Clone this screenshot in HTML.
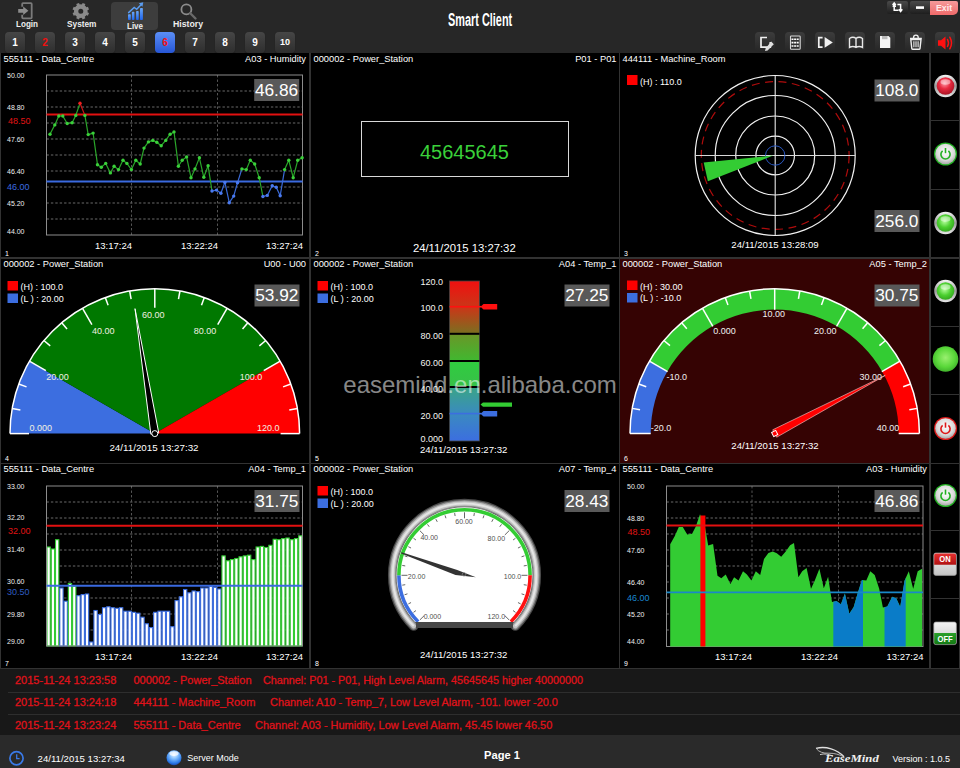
<!DOCTYPE html>
<html><head><meta charset="utf-8">
<style>
*{margin:0;padding:0;box-sizing:border-box}
html,body{width:960px;height:768px;overflow:hidden;background:#272727;font-family:"Liberation Sans",sans-serif;color:#fff}
.a{position:absolute}
svg{position:absolute;left:0;top:0}
.nb{position:absolute;top:32px;width:20px;height:21px;border-radius:4px;background:linear-gradient(#464646,#2e2e2e);font-weight:bold;font-size:10px;text-align:center;line-height:21px;color:#fff;box-shadow:0 1px 1px #1a1a1a}
.tb{position:absolute;top:32px;width:20px;height:20px;border-radius:4px;background:linear-gradient(#3c3c3c,#262626)}
.tl{position:absolute;font-weight:bold;font-size:9px;color:#eee;white-space:nowrap;transform-origin:0 0}
.pt{font-size:9px;fill:#fff}
.al{position:absolute;left:0;width:960px;height:22px;color:#e8121a;font-size:11px;white-space:nowrap;-webkit-text-stroke:0.3px #d8121a}
.al span{position:absolute;top:5px}
</style></head><body>
<!-- TOP BAR -->
<div class="a" style="left:0;top:0;width:960px;height:53px;background:#272727"></div>
<div class="a" style="left:111px;top:2px;width:47px;height:28px;border-radius:4px;background:#3d3d3d"></div>
<div class="tl" style="left:16px;top:18.5px;transform:scaleX(0.9)">Login</div>
<div class="tl" style="left:67px;top:18.5px;transform:scaleX(0.92)">System</div>
<div class="tl" style="left:127px;top:20.5px;transform:scaleX(0.89)">Live</div>
<div class="tl" style="left:173px;top:18.5px;transform:scaleX(0.97)">History</div>
<div class="nb" style="left:5px">1</div>
<div class="nb" style="left:35px;color:#f01010">2</div>
<div class="nb" style="left:65px">3</div>
<div class="nb" style="left:95px">4</div>
<div class="nb" style="left:125px">5</div>
<div class="nb" style="left:155px;background:linear-gradient(#5b8ef5,#2656d6);color:#f01010">6</div>
<div class="nb" style="left:185px">7</div>
<div class="nb" style="left:215px">8</div>
<div class="nb" style="left:245px">9</div>
<div class="nb" style="left:275px;font-size:9px">10</div>
<div class="a" style="left:448px;top:8.5px;font-weight:bold;font-size:18.8px;white-space:nowrap;transform:scaleX(0.58);transform-origin:0 0">Smart Client</div>
<div class="tb" style="left:755px"></div>
<div class="tb" style="left:785px"></div>
<div class="tb" style="left:815px"></div>
<div class="tb" style="left:845px"></div>
<div class="tb" style="left:875px"></div>
<div class="tb" style="left:905px"></div>
<div class="tb" style="left:935px"></div>
<div class="a" style="left:887px;top:1px;width:21px;height:13px;border-radius:2px;background:linear-gradient(#4a4a4a,#1e1e1e)"></div>
<div class="a" style="left:910px;top:1px;width:21px;height:13px;border-radius:2px 0 0 2px;background:linear-gradient(#4a4a4a,#1e1e1e)"></div>
<div class="a" style="left:930px;top:1px;width:28px;height:14px;border-radius:0 2px 5px 0;background:linear-gradient(#f59a9a,#ef6a6a);font-size:8.8px;font-weight:bold;line-height:14px;text-align:center;color:#ffeaea">Exit</div>

<!-- GRID -->
<div class="a" style="left:0;top:53px;width:960px;height:616px;background:#323232"></div>
<div class="a" style="left:1px;top:53px;width:308px;height:204px;background:#000"></div>
<div class="a" style="left:311px;top:53px;width:308px;height:204px;background:#000"></div>
<div class="a" style="left:620px;top:53px;width:309px;height:204px;background:#000"></div>
<div class="a" style="left:1px;top:259px;width:308px;height:204px;background:#000"></div>
<div class="a" style="left:311px;top:259px;width:308px;height:204px;background:#000"></div>
<div class="a" style="left:620px;top:259px;width:309px;height:204px;background:#350303"></div>
<div class="a" style="left:1px;top:464px;width:308px;height:204px;background:#000"></div>
<div class="a" style="left:311px;top:464px;width:308px;height:204px;background:#000"></div>
<div class="a" style="left:620px;top:464px;width:309px;height:204px;background:#000"></div>
<div class="a" style="left:931px;top:53px;width:28px;height:67px;background:#000"></div>
<div class="a" style="left:931px;top:121px;width:28px;height:68px;background:#000"></div>
<div class="a" style="left:931px;top:190px;width:28px;height:67px;background:#000"></div>
<div class="a" style="left:931px;top:259px;width:28px;height:67px;background:#000"></div>
<div class="a" style="left:931px;top:327px;width:28px;height:67px;background:#000"></div>
<div class="a" style="left:931px;top:395px;width:28px;height:68px;background:#000"></div>
<div class="a" style="left:931px;top:464px;width:28px;height:66px;background:#000"></div>
<div class="a" style="left:931px;top:531px;width:28px;height:67px;background:#000"></div>
<div class="a" style="left:931px;top:599px;width:28px;height:69px;background:#000"></div>

<!-- ALARMS -->
<div class="a" style="left:0;top:669px;width:960px;height:66px;background:#181818"></div>
<div class="a" style="left:8px;top:692px;width:952px;height:1px;background:#2e2e2e"></div>
<div class="a" style="left:8px;top:714px;width:952px;height:1px;background:#2e2e2e"></div>
<div class="al" style="top:669px"><span style="left:15px">2015-11-24 13:23:58</span><span style="left:133.5px">000002 - Power_Station</span><span style="left:263.3px;transform:scaleX(0.982);transform-origin:0 0">Channel: P01 - P01, High Level Alarm, 45645645 higher 40000000</span></div>
<div class="al" style="top:691px"><span style="left:15px">2015-11-24 13:24:18</span><span style="left:133.5px">444111 - Machine_Room</span><span style="left:269.5px;transform:scaleX(0.992);transform-origin:0 0">Channel: A10 - Temp_7, Low Level Alarm, -101. lower -20.0</span></div>
<div class="al" style="top:714px"><span style="left:15px">2015-11-24 13:23:24</span><span style="left:133.5px">555111 - Data_Centre</span><span style="left:255px;transform:scaleX(0.997);transform-origin:0 0">Channel: A03 - Humidity, Low Level Alarm, 45.45 lower 46.50</span></div>

<!-- FOOTER -->
<div class="a" style="left:0;top:735px;width:960px;height:33px;background:#2a2a2a"></div>
<div class="a" style="left:37.6px;top:753px;font-size:9.6px;color:#fff;white-space:nowrap">24/11/2015 13:27:34</div>
<div class="a" style="left:187.2px;top:753px;font-size:9px;color:#fff;white-space:nowrap">Server Mode</div>
<div class="a" style="left:483.5px;top:749px;font-size:11.5px;font-weight:bold;color:#fff;white-space:nowrap;transform:scaleX(0.97);transform-origin:0 0">Page 1</div>
<div class="a" style="left:892.5px;top:753.5px;font-size:9px;color:#fff;white-space:nowrap">Version : 1.0.5</div>

<svg width="960" height="768" font-family="Liberation Sans" style="position:absolute;left:0;top:0"><text x="3.5" y="62" font-size="9.3" fill="#fff" text-anchor="start" >555111 - Data_Centre</text>
<text x="306" y="62" font-size="9.3" fill="#fff" text-anchor="end" >A03 - Humidity</text>
<text x="313.5" y="62" font-size="9.3" fill="#fff" text-anchor="start" >000002 - Power_Station</text>
<text x="616.5" y="62" font-size="9.3" fill="#fff" text-anchor="end" >P01 - P01</text>
<text x="622.5" y="62" font-size="9.3" fill="#fff" text-anchor="start" >444111 - Machine_Room</text>
<text x="3.5" y="267" font-size="9.3" fill="#fff" text-anchor="start" >000002 - Power_Station</text>
<text x="306" y="267" font-size="9.3" fill="#fff" text-anchor="end" >U00 - U00</text>
<text x="313.5" y="267" font-size="9.3" fill="#fff" text-anchor="start" >000002 - Power_Station</text>
<text x="616.5" y="267" font-size="9.3" fill="#fff" text-anchor="end" >A04 - Temp_1</text>
<text x="622.5" y="267" font-size="9.3" fill="#fff" text-anchor="start" >000002 - Power_Station</text>
<text x="927" y="267" font-size="9.3" fill="#fff" text-anchor="end" >A05 - Temp_2</text>
<text x="3.5" y="472" font-size="9.3" fill="#fff" text-anchor="start" >555111 - Data_Centre</text>
<text x="306" y="472" font-size="9.3" fill="#fff" text-anchor="end" >A04 - Temp_1</text>
<text x="313.5" y="472" font-size="9.3" fill="#fff" text-anchor="start" >000002 - Power_Station</text>
<text x="616.5" y="472" font-size="9.3" fill="#fff" text-anchor="end" >A07 - Temp_4</text>
<text x="622.5" y="472" font-size="9.3" fill="#fff" text-anchor="start" >555111 - Data_Centre</text>
<text x="927" y="472" font-size="9.3" fill="#fff" text-anchor="end" >A03 - Humidity</text>
<text x="5" y="255.5" font-size="7" fill="#fff" text-anchor="start" >1</text>
<text x="315" y="255.5" font-size="7" fill="#fff" text-anchor="start" >2</text>
<text x="624" y="255.5" font-size="7" fill="#fff" text-anchor="start" >3</text>
<text x="5" y="460.5" font-size="7" fill="#fff" text-anchor="start" >4</text>
<text x="315" y="460.5" font-size="7" fill="#fff" text-anchor="start" >5</text>
<text x="624" y="460.5" font-size="7" fill="#fff" text-anchor="start" >6</text>
<text x="5" y="666" font-size="7" fill="#fff" text-anchor="start" >7</text>
<text x="315" y="666" font-size="7" fill="#fff" text-anchor="start" >8</text>
<text x="624" y="666" font-size="7" fill="#fff" text-anchor="start" >9</text>
<rect x="361.5" y="121.5" width="207" height="55" fill="none" stroke="#d8d8d8" stroke-width="1"/>
<text x="464.5" y="158.5" font-size="20" fill="#3ad13a" text-anchor="middle" >45645645</text>
<text x="464.3" y="252.3" font-size="11.3" fill="#fff" text-anchor="middle" >24/11/2015 13:27:32</text>
<circle cx="775.2" cy="155.5" r="73.9" fill="none" stroke="#b00c0c" stroke-width="1.2" stroke-dasharray="8,5.5"/>
<circle cx="775.2" cy="155.5" r="80" fill="none" stroke="#f2f2f2" stroke-width="1.2"/>
<circle cx="775.2" cy="155.5" r="60" fill="none" stroke="#f2f2f2" stroke-width="1.2"/>
<circle cx="775.2" cy="155.5" r="39.5" fill="none" stroke="#f2f2f2" stroke-width="1.2"/>
<circle cx="775.2" cy="155.5" r="19.3" fill="none" stroke="#f2f2f2" stroke-width="1.2"/>
<line x1="695.2" y1="155.5" x2="855.2" y2="155.5" stroke="#d8d8d8" stroke-width="1.1"/>
<line x1="775.2" y1="75.5" x2="775.2" y2="235.5" stroke="#e8e8e8" stroke-width="1.1"/>
<circle cx="775.2" cy="155.5" r="9.7" fill="none" stroke="#2a58c0" stroke-width="1"/>
<path d="M773.2,155.5 L703.7,162.5 L707.9,181.3 Z" fill="#33cc33"/>
<rect x="627" y="75" width="10.5" height="10" fill="#ff0000"/>
<text x="640" y="84.5" font-size="9" fill="#fff" text-anchor="start" >(H) : 110.0</text>
<rect x="874.5" y="79.5" width="45" height="22" fill="#595959"/><text x="896.8" y="96.2" font-size="17.3" fill="#fff" text-anchor="middle" >108.0</text>
<rect x="874.5" y="210" width="45" height="22" fill="#595959"/><text x="896.8" y="226.7" font-size="17.3" fill="#fff" text-anchor="middle" >256.0</text>
<text x="775" y="247.5" font-size="9.6" fill="#fff" text-anchor="middle" >24/11/2015 13:28:09</text>
<path d="M154.8,433.6 L10.00,433.60 A144.8,144.8 0 0 1 29.40,361.20 Z" fill="#3c6ee0"/>
<path d="M154.8,433.6 L29.40,361.20 A144.8,144.8 0 0 1 280.20,361.20 Z" fill="#007800"/>
<path d="M154.8,433.6 L280.20,361.20 A144.8,144.8 0 0 1 299.60,433.60 Z" fill="#ff0000"/>
<path d="M10.0,433.6 A144.8,144.8 0 0 1 299.6,433.6" fill="none" stroke="#fff" stroke-width="1.5"/>
<line x1="299.60" y1="433.60" x2="280.60" y2="433.60" stroke="#fff" stroke-width="1.5"/>
<line x1="297.40" y1="408.46" x2="289.23" y2="409.90" stroke="#fff" stroke-width="1.5"/>
<line x1="290.87" y1="384.08" x2="283.07" y2="386.91" stroke="#fff" stroke-width="1.5"/>
<line x1="280.20" y1="361.20" x2="263.75" y2="370.70" stroke="#fff" stroke-width="1.5"/>
<line x1="265.72" y1="340.52" x2="259.37" y2="345.86" stroke="#fff" stroke-width="1.5"/>
<line x1="247.88" y1="322.68" x2="242.54" y2="329.03" stroke="#fff" stroke-width="1.5"/>
<line x1="227.20" y1="308.20" x2="217.70" y2="324.65" stroke="#fff" stroke-width="1.5"/>
<line x1="204.32" y1="297.53" x2="201.49" y2="305.33" stroke="#fff" stroke-width="1.5"/>
<line x1="179.94" y1="291.00" x2="178.50" y2="299.17" stroke="#fff" stroke-width="1.5"/>
<line x1="154.80" y1="288.80" x2="154.80" y2="307.80" stroke="#fff" stroke-width="1.5"/>
<line x1="129.66" y1="291.00" x2="131.10" y2="299.17" stroke="#fff" stroke-width="1.5"/>
<line x1="105.28" y1="297.53" x2="108.11" y2="305.33" stroke="#fff" stroke-width="1.5"/>
<line x1="82.40" y1="308.20" x2="91.90" y2="324.65" stroke="#fff" stroke-width="1.5"/>
<line x1="61.72" y1="322.68" x2="67.06" y2="329.03" stroke="#fff" stroke-width="1.5"/>
<line x1="43.88" y1="340.52" x2="50.23" y2="345.86" stroke="#fff" stroke-width="1.5"/>
<line x1="29.40" y1="361.20" x2="45.85" y2="370.70" stroke="#fff" stroke-width="1.5"/>
<line x1="18.73" y1="384.08" x2="26.53" y2="386.91" stroke="#fff" stroke-width="1.5"/>
<line x1="12.20" y1="408.46" x2="20.37" y2="409.90" stroke="#fff" stroke-width="1.5"/>
<line x1="10.00" y1="433.60" x2="29.00" y2="433.60" stroke="#fff" stroke-width="1.5"/>
<text x="40.8" y="430.5" font-size="9" fill="#f0f0e0" text-anchor="middle" >0.000</text>
<text x="57.5" y="379.5" font-size="9" fill="#f0f0e0" text-anchor="middle" >20.00</text>
<text x="103.3" y="333.5" font-size="9" fill="#f0f0e0" text-anchor="middle" >40.00</text>
<text x="153.3" y="317.5" font-size="9" fill="#f0f0e0" text-anchor="middle" >60.00</text>
<text x="205" y="333.5" font-size="9" fill="#f0f0e0" text-anchor="middle" >80.00</text>
<text x="251" y="379.5" font-size="9" fill="#f0f0e0" text-anchor="middle" >100.0</text>
<text x="268.3" y="430.5" font-size="9" fill="#f0f0e0" text-anchor="middle" >120.0</text>
<path d="M150.85,434.23 L135.01,308.66 L158.75,432.97 Z" fill="#000" stroke="#fff" stroke-width="1"/>
<circle cx="154.8" cy="433.6" r="3" fill="#000" stroke="#fff" stroke-width="1"/>
<rect x="7.5" y="281" width="10.5" height="9.5" fill="#ff0000"/><rect x="7.5" y="293.5" width="10.5" height="9.5" fill="#3c6ee0"/><text x="20.5" y="290" font-size="9" fill="#fff" text-anchor="start" >(H) : 100.0</text><text x="20.5" y="301.5" font-size="9" fill="#fff" text-anchor="start" >(L ) : 20.00</text>
<rect x="254.5" y="284.5" width="45" height="22" fill="#595959"/><text x="276.8" y="301.2" font-size="17.3" fill="#fff" text-anchor="middle" >53.92</text>
<text x="154" y="450.8" font-size="9.8" fill="#fff" text-anchor="middle" >24/11/2015 13:27:32</text>
<path d="M630.00,433.50 A144.7,144.7 0 0 1 649.39,361.15 L667.31,371.50 A124,124 0 0 0 650.70,433.50 Z" fill="#3c6ee0"/>
<path d="M649.39,361.15 A144.7,144.7 0 0 1 900.01,361.15 L882.09,371.50 A124,124 0 0 0 667.31,371.50 Z" fill="#33cc33"/>
<path d="M900.01,361.15 A144.7,144.7 0 0 1 919.40,433.50 L898.70,433.50 A124,124 0 0 0 882.09,371.50 Z" fill="#ff0000"/>
<path d="M630.0,433.5 A144.7,144.7 0 0 1 919.4000000000001,433.5" fill="none" stroke="#fff" stroke-width="1.5"/>
<line x1="630.0" y1="433.5" x2="650.7" y2="433.5" stroke="#fff" stroke-width="1.5"/>
<line x1="919.4000000000001" y1="433.5" x2="898.7" y2="433.5" stroke="#fff" stroke-width="1.5"/>
<line x1="917.20" y1="408.37" x2="909.32" y2="409.76" stroke="#fff" stroke-width="1.5"/>
<line x1="910.67" y1="384.01" x2="903.16" y2="386.75" stroke="#fff" stroke-width="1.5"/>
<line x1="900.01" y1="361.15" x2="881.83" y2="371.65" stroke="#fff" stroke-width="1.5"/>
<line x1="885.55" y1="340.49" x2="879.42" y2="345.63" stroke="#fff" stroke-width="1.5"/>
<line x1="867.71" y1="322.65" x2="862.57" y2="328.78" stroke="#fff" stroke-width="1.5"/>
<line x1="847.05" y1="308.19" x2="836.55" y2="326.37" stroke="#fff" stroke-width="1.5"/>
<line x1="824.19" y1="297.53" x2="821.45" y2="305.04" stroke="#fff" stroke-width="1.5"/>
<line x1="799.83" y1="291.00" x2="798.44" y2="298.88" stroke="#fff" stroke-width="1.5"/>
<line x1="774.70" y1="288.80" x2="774.70" y2="309.80" stroke="#fff" stroke-width="1.5"/>
<line x1="749.57" y1="291.00" x2="750.96" y2="298.88" stroke="#fff" stroke-width="1.5"/>
<line x1="725.21" y1="297.53" x2="727.95" y2="305.04" stroke="#fff" stroke-width="1.5"/>
<line x1="702.35" y1="308.19" x2="712.85" y2="326.37" stroke="#fff" stroke-width="1.5"/>
<line x1="681.69" y1="322.65" x2="686.83" y2="328.78" stroke="#fff" stroke-width="1.5"/>
<line x1="663.85" y1="340.49" x2="669.98" y2="345.63" stroke="#fff" stroke-width="1.5"/>
<line x1="649.39" y1="361.15" x2="667.57" y2="371.65" stroke="#fff" stroke-width="1.5"/>
<line x1="638.73" y1="384.01" x2="646.24" y2="386.75" stroke="#fff" stroke-width="1.5"/>
<line x1="632.20" y1="408.37" x2="640.08" y2="409.76" stroke="#fff" stroke-width="1.5"/>
<text x="661" y="430.5" font-size="9" fill="#f0f0f0" text-anchor="middle" >-20.0</text>
<text x="676.8" y="379.5" font-size="9" fill="#f0f0f0" text-anchor="middle" >-10.0</text>
<text x="724.6" y="333.5" font-size="9" fill="#f0f0f0" text-anchor="middle" >0.000</text>
<text x="773.8" y="316.8" font-size="9" fill="#f0f0f0" text-anchor="middle" >10.00</text>
<text x="825.2" y="333.5" font-size="9" fill="#f0f0f0" text-anchor="middle" >20.00</text>
<text x="870.8" y="379.5" font-size="9" fill="#f0f0f0" text-anchor="middle" >30.00</text>
<text x="888" y="430.5" font-size="9" fill="#f0f0f0" text-anchor="middle" >40.00</text>
<path d="M772.75,429.78 L885.20,375.40 L776.65,437.22 Z" fill="#ff0000" stroke="#f4d0d0" stroke-width="0.6"/>
<rect x="772.4000000000001" y="431.2" width="4.6" height="4.6" fill="#ff0000" stroke="#fff" stroke-width="1" transform="rotate(-27.735028064620387 774.7 433.5)"/>
<rect x="627" y="280.5" width="10.5" height="9.5" fill="#ff0000"/><rect x="627" y="293.0" width="10.5" height="9.5" fill="#3c6ee0"/><text x="640" y="289.5" font-size="9" fill="#fff" text-anchor="start" >(H) : 30.00</text><text x="640" y="301.0" font-size="9" fill="#fff" text-anchor="start" >(L ) : -10.0</text>
<rect x="874.5" y="284.5" width="45" height="22" fill="#595959"/><text x="896.8" y="301.2" font-size="17.3" fill="#fff" text-anchor="middle" >30.75</text>
<text x="775" y="449" font-size="9.6" fill="#fff" text-anchor="middle" >24/11/2015 13:27:32</text>
<line x1="46.5" y1="91" x2="302.5" y2="91" stroke="#6a6a6a" stroke-dasharray="2.4,2" stroke-width="1"/>
<line x1="46.5" y1="107" x2="302.5" y2="107" stroke="#6a6a6a" stroke-dasharray="2.4,2" stroke-width="1"/>
<line x1="46.5" y1="123" x2="302.5" y2="123" stroke="#6a6a6a" stroke-dasharray="2.4,2" stroke-width="1"/>
<line x1="46.5" y1="139" x2="302.5" y2="139" stroke="#6a6a6a" stroke-dasharray="2.4,2" stroke-width="1"/>
<line x1="46.5" y1="155" x2="302.5" y2="155" stroke="#6a6a6a" stroke-dasharray="2.4,2" stroke-width="1"/>
<line x1="46.5" y1="171" x2="302.5" y2="171" stroke="#6a6a6a" stroke-dasharray="2.4,2" stroke-width="1"/>
<line x1="46.5" y1="187" x2="302.5" y2="187" stroke="#6a6a6a" stroke-dasharray="2.4,2" stroke-width="1"/>
<line x1="46.5" y1="203" x2="302.5" y2="203" stroke="#6a6a6a" stroke-dasharray="2.4,2" stroke-width="1"/>
<line x1="46.5" y1="219" x2="302.5" y2="219" stroke="#6a6a6a" stroke-dasharray="2.4,2" stroke-width="1"/>
<line x1="131.5" y1="75" x2="131.5" y2="235" stroke="#555" stroke-dasharray="2.4,2.1" stroke-width="1"/>
<line x1="217.5" y1="75" x2="217.5" y2="235" stroke="#555" stroke-dasharray="2.4,2.1" stroke-width="1"/>
<rect x="46.5" y="75" width="256.0" height="160" fill="none" stroke="#8c8c8c" stroke-width="1"/>
<text x="7" y="78" font-size="7" fill="#eee" text-anchor="start" >50.00</text>
<text x="7" y="110" font-size="7" fill="#eee" text-anchor="start" >48.80</text>
<text x="7" y="142" font-size="7" fill="#eee" text-anchor="start" >47.60</text>
<text x="7" y="174" font-size="7" fill="#eee" text-anchor="start" >46.40</text>
<text x="7" y="206" font-size="7" fill="#eee" text-anchor="start" >45.20</text>
<text x="7" y="234" font-size="7" fill="#eee" text-anchor="start" >44.00</text>
<text x="8" y="124" font-size="9" fill="#e01414" text-anchor="start" >48.50</text>
<text x="7" y="190" font-size="9" fill="#3b6be0" text-anchor="start" >46.00</text>
<line x1="46.5" y1="114.5" x2="302.5" y2="114.5" stroke="#e21010" stroke-width="2"/>
<line x1="46.5" y1="181.5" x2="302.5" y2="181.5" stroke="#3a6ae0" stroke-width="2"/>
<line x1="50.0" y1="134.2" x2="54.8" y2="124.9" stroke="#2aa52a" stroke-width="1.2" stroke-linecap="round"/>
<line x1="54.8" y1="124.9" x2="58.8" y2="116.0" stroke="#2aa52a" stroke-width="1.2" stroke-linecap="round"/>
<line x1="58.8" y1="116.0" x2="62.8" y2="116.0" stroke="#2aa52a" stroke-width="1.2" stroke-linecap="round"/>
<line x1="62.8" y1="116.0" x2="67.2" y2="123.5" stroke="#2aa52a" stroke-width="1.2" stroke-linecap="round"/>
<line x1="67.2" y1="123.5" x2="72.1" y2="122.7" stroke="#2aa52a" stroke-width="1.2" stroke-linecap="round"/>
<line x1="72.1" y1="122.7" x2="75.8" y2="115.4" stroke="#2aa52a" stroke-width="1.2" stroke-linecap="round"/>
<line x1="75.8" y1="115.4" x2="80.0" y2="103.2" stroke="#2aa52a" stroke-width="1.2" stroke-linecap="round"/>
<line x1="80.0" y1="103.2" x2="84.9" y2="115.4" stroke="#d01818" stroke-width="1.2" stroke-linecap="round"/>
<line x1="84.9" y1="115.4" x2="88.2" y2="134.6" stroke="#2aa52a" stroke-width="1.2" stroke-linecap="round"/>
<line x1="88.2" y1="134.6" x2="93.1" y2="133.1" stroke="#2aa52a" stroke-width="1.2" stroke-linecap="round"/>
<line x1="93.1" y1="133.1" x2="97.5" y2="164.7" stroke="#2aa52a" stroke-width="1.2" stroke-linecap="round"/>
<line x1="97.5" y1="164.7" x2="101.3" y2="167.3" stroke="#2aa52a" stroke-width="1.2" stroke-linecap="round"/>
<line x1="101.3" y1="167.3" x2="105.7" y2="163.4" stroke="#2aa52a" stroke-width="1.2" stroke-linecap="round"/>
<line x1="105.7" y1="163.4" x2="110.4" y2="172.9" stroke="#2aa52a" stroke-width="1.2" stroke-linecap="round"/>
<line x1="110.4" y1="172.9" x2="114.1" y2="166.2" stroke="#2aa52a" stroke-width="1.2" stroke-linecap="round"/>
<line x1="114.1" y1="166.2" x2="118.5" y2="169.6" stroke="#2aa52a" stroke-width="1.2" stroke-linecap="round"/>
<line x1="118.5" y1="169.6" x2="123.0" y2="160.3" stroke="#2aa52a" stroke-width="1.2" stroke-linecap="round"/>
<line x1="123.0" y1="160.3" x2="126.9" y2="163.4" stroke="#2aa52a" stroke-width="1.2" stroke-linecap="round"/>
<line x1="126.9" y1="163.4" x2="131.4" y2="169.6" stroke="#2aa52a" stroke-width="1.2" stroke-linecap="round"/>
<line x1="131.4" y1="169.6" x2="135.8" y2="160.3" stroke="#2aa52a" stroke-width="1.2" stroke-linecap="round"/>
<line x1="135.8" y1="160.3" x2="140.2" y2="164.0" stroke="#2aa52a" stroke-width="1.2" stroke-linecap="round"/>
<line x1="140.2" y1="164.0" x2="144.0" y2="148.1" stroke="#2aa52a" stroke-width="1.2" stroke-linecap="round"/>
<line x1="144.0" y1="148.1" x2="148.4" y2="141.9" stroke="#2aa52a" stroke-width="1.2" stroke-linecap="round"/>
<line x1="148.4" y1="141.9" x2="152.8" y2="140.4" stroke="#2aa52a" stroke-width="1.2" stroke-linecap="round"/>
<line x1="152.8" y1="140.4" x2="156.8" y2="142.3" stroke="#2aa52a" stroke-width="1.2" stroke-linecap="round"/>
<line x1="156.8" y1="142.3" x2="161.2" y2="145.7" stroke="#2aa52a" stroke-width="1.2" stroke-linecap="round"/>
<line x1="161.2" y1="145.7" x2="165.7" y2="140.4" stroke="#2aa52a" stroke-width="1.2" stroke-linecap="round"/>
<line x1="165.7" y1="140.4" x2="170.1" y2="134.2" stroke="#2aa52a" stroke-width="1.2" stroke-linecap="round"/>
<line x1="170.1" y1="134.2" x2="174.0" y2="131.9" stroke="#2aa52a" stroke-width="1.2" stroke-linecap="round"/>
<line x1="174.0" y1="131.9" x2="178.4" y2="166.2" stroke="#2aa52a" stroke-width="1.2" stroke-linecap="round"/>
<line x1="178.4" y1="166.2" x2="182.2" y2="160.3" stroke="#2aa52a" stroke-width="1.2" stroke-linecap="round"/>
<line x1="182.2" y1="160.3" x2="186.6" y2="156.9" stroke="#2aa52a" stroke-width="1.2" stroke-linecap="round"/>
<line x1="186.6" y1="156.9" x2="191.0" y2="177.7" stroke="#2aa52a" stroke-width="1.2" stroke-linecap="round"/>
<line x1="191.0" y1="177.7" x2="195.0" y2="168.9" stroke="#2aa52a" stroke-width="1.2" stroke-linecap="round"/>
<line x1="195.0" y1="168.9" x2="199.4" y2="157.8" stroke="#2aa52a" stroke-width="1.2" stroke-linecap="round"/>
<line x1="199.4" y1="157.8" x2="203.8" y2="177.3" stroke="#2aa52a" stroke-width="1.2" stroke-linecap="round"/>
<line x1="203.8" y1="177.3" x2="208.1" y2="165.8" stroke="#2aa52a" stroke-width="1.2" stroke-linecap="round"/>
<line x1="208.1" y1="165.8" x2="212.0" y2="191.0" stroke="#2aa52a" stroke-width="1.2" stroke-linecap="round"/>
<line x1="212.0" y1="191.0" x2="216.5" y2="190.1" stroke="#3a6ad8" stroke-width="1.2" stroke-linecap="round"/>
<line x1="216.5" y1="190.1" x2="220.9" y2="193.2" stroke="#3a6ad8" stroke-width="1.2" stroke-linecap="round"/>
<line x1="220.9" y1="193.2" x2="224.9" y2="182.4" stroke="#3a6ad8" stroke-width="1.2" stroke-linecap="round"/>
<line x1="224.9" y1="182.4" x2="229.3" y2="202.7" stroke="#3a6ad8" stroke-width="1.2" stroke-linecap="round"/>
<line x1="229.3" y1="202.7" x2="233.7" y2="196.1" stroke="#3a6ad8" stroke-width="1.2" stroke-linecap="round"/>
<line x1="233.7" y1="196.1" x2="237.5" y2="182.8" stroke="#3a6ad8" stroke-width="1.2" stroke-linecap="round"/>
<line x1="237.5" y1="182.8" x2="241.9" y2="168.9" stroke="#3a6ad8" stroke-width="1.2" stroke-linecap="round"/>
<line x1="241.9" y1="168.9" x2="246.3" y2="169.6" stroke="#2aa52a" stroke-width="1.2" stroke-linecap="round"/>
<line x1="246.3" y1="169.6" x2="250.3" y2="160.3" stroke="#2aa52a" stroke-width="1.2" stroke-linecap="round"/>
<line x1="250.3" y1="160.3" x2="254.7" y2="164.0" stroke="#2aa52a" stroke-width="1.2" stroke-linecap="round"/>
<line x1="254.7" y1="164.0" x2="259.2" y2="177.7" stroke="#2aa52a" stroke-width="1.2" stroke-linecap="round"/>
<line x1="259.2" y1="177.7" x2="262.9" y2="196.5" stroke="#2aa52a" stroke-width="1.2" stroke-linecap="round"/>
<line x1="262.9" y1="196.5" x2="267.3" y2="195.4" stroke="#3a6ad8" stroke-width="1.2" stroke-linecap="round"/>
<line x1="267.3" y1="195.4" x2="272.2" y2="185.7" stroke="#3a6ad8" stroke-width="1.2" stroke-linecap="round"/>
<line x1="272.2" y1="185.7" x2="276.2" y2="187.3" stroke="#3a6ad8" stroke-width="1.2" stroke-linecap="round"/>
<line x1="276.2" y1="187.3" x2="280.2" y2="195.7" stroke="#3a6ad8" stroke-width="1.2" stroke-linecap="round"/>
<line x1="280.2" y1="195.7" x2="284.6" y2="169.6" stroke="#3a6ad8" stroke-width="1.2" stroke-linecap="round"/>
<line x1="284.6" y1="169.6" x2="288.8" y2="160.3" stroke="#2aa52a" stroke-width="1.2" stroke-linecap="round"/>
<line x1="288.8" y1="160.3" x2="293.2" y2="177.7" stroke="#2aa52a" stroke-width="1.2" stroke-linecap="round"/>
<line x1="293.2" y1="177.7" x2="297.7" y2="160.3" stroke="#2aa52a" stroke-width="1.2" stroke-linecap="round"/>
<line x1="297.7" y1="160.3" x2="302.1" y2="157.8" stroke="#2aa52a" stroke-width="1.2" stroke-linecap="round"/>
<circle cx="50.0" cy="134.2" r="1.7" fill="#3ad03a"/>
<circle cx="54.8" cy="124.9" r="1.7" fill="#3ad03a"/>
<circle cx="58.8" cy="116.0" r="1.7" fill="#3ad03a"/>
<circle cx="62.8" cy="116.0" r="1.7" fill="#3ad03a"/>
<circle cx="67.2" cy="123.5" r="1.7" fill="#3ad03a"/>
<circle cx="72.1" cy="122.7" r="1.7" fill="#3ad03a"/>
<circle cx="75.8" cy="115.4" r="1.7" fill="#3ad03a"/>
<circle cx="80.0" cy="103.2" r="1.7" fill="#ee2020"/>
<circle cx="84.9" cy="115.4" r="1.7" fill="#3ad03a"/>
<circle cx="88.2" cy="134.6" r="1.7" fill="#3ad03a"/>
<circle cx="93.1" cy="133.1" r="1.7" fill="#3ad03a"/>
<circle cx="97.5" cy="164.7" r="1.7" fill="#3ad03a"/>
<circle cx="101.3" cy="167.3" r="1.7" fill="#3ad03a"/>
<circle cx="105.7" cy="163.4" r="1.7" fill="#3ad03a"/>
<circle cx="110.4" cy="172.9" r="1.7" fill="#3ad03a"/>
<circle cx="114.1" cy="166.2" r="1.7" fill="#3ad03a"/>
<circle cx="118.5" cy="169.6" r="1.7" fill="#3ad03a"/>
<circle cx="123.0" cy="160.3" r="1.7" fill="#3ad03a"/>
<circle cx="126.9" cy="163.4" r="1.7" fill="#3ad03a"/>
<circle cx="131.4" cy="169.6" r="1.7" fill="#3ad03a"/>
<circle cx="135.8" cy="160.3" r="1.7" fill="#3ad03a"/>
<circle cx="140.2" cy="164.0" r="1.7" fill="#3ad03a"/>
<circle cx="144.0" cy="148.1" r="1.7" fill="#3ad03a"/>
<circle cx="148.4" cy="141.9" r="1.7" fill="#3ad03a"/>
<circle cx="152.8" cy="140.4" r="1.7" fill="#3ad03a"/>
<circle cx="156.8" cy="142.3" r="1.7" fill="#3ad03a"/>
<circle cx="161.2" cy="145.7" r="1.7" fill="#3ad03a"/>
<circle cx="165.7" cy="140.4" r="1.7" fill="#3ad03a"/>
<circle cx="170.1" cy="134.2" r="1.7" fill="#3ad03a"/>
<circle cx="174.0" cy="131.9" r="1.7" fill="#3ad03a"/>
<circle cx="178.4" cy="166.2" r="1.7" fill="#3ad03a"/>
<circle cx="182.2" cy="160.3" r="1.7" fill="#3ad03a"/>
<circle cx="186.6" cy="156.9" r="1.7" fill="#3ad03a"/>
<circle cx="191.0" cy="177.7" r="1.7" fill="#3ad03a"/>
<circle cx="195.0" cy="168.9" r="1.7" fill="#3ad03a"/>
<circle cx="199.4" cy="157.8" r="1.7" fill="#3ad03a"/>
<circle cx="203.8" cy="177.3" r="1.7" fill="#3ad03a"/>
<circle cx="208.1" cy="165.8" r="1.7" fill="#3ad03a"/>
<circle cx="212.0" cy="191.0" r="1.7" fill="#4a7af0"/>
<circle cx="216.5" cy="190.1" r="1.7" fill="#4a7af0"/>
<circle cx="220.9" cy="193.2" r="1.7" fill="#4a7af0"/>
<circle cx="224.9" cy="182.4" r="1.7" fill="#4a7af0"/>
<circle cx="229.3" cy="202.7" r="1.7" fill="#4a7af0"/>
<circle cx="233.7" cy="196.1" r="1.7" fill="#4a7af0"/>
<circle cx="237.5" cy="182.8" r="1.7" fill="#4a7af0"/>
<circle cx="241.9" cy="168.9" r="1.7" fill="#3ad03a"/>
<circle cx="246.3" cy="169.6" r="1.7" fill="#3ad03a"/>
<circle cx="250.3" cy="160.3" r="1.7" fill="#3ad03a"/>
<circle cx="254.7" cy="164.0" r="1.7" fill="#3ad03a"/>
<circle cx="259.2" cy="177.7" r="1.7" fill="#3ad03a"/>
<circle cx="262.9" cy="196.5" r="1.7" fill="#4a7af0"/>
<circle cx="267.3" cy="195.4" r="1.7" fill="#4a7af0"/>
<circle cx="272.2" cy="185.7" r="1.7" fill="#4a7af0"/>
<circle cx="276.2" cy="187.3" r="1.7" fill="#4a7af0"/>
<circle cx="280.2" cy="195.7" r="1.7" fill="#4a7af0"/>
<circle cx="284.6" cy="169.6" r="1.7" fill="#3ad03a"/>
<circle cx="288.8" cy="160.3" r="1.7" fill="#3ad03a"/>
<circle cx="293.2" cy="177.7" r="1.7" fill="#3ad03a"/>
<circle cx="297.7" cy="160.3" r="1.7" fill="#3ad03a"/>
<circle cx="302.1" cy="157.8" r="1.7" fill="#3ad03a"/>
<text x="113.5" y="248.8" font-size="9.5" fill="#fff" text-anchor="middle" >13:17:24</text>
<text x="199.5" y="248.8" font-size="9.5" fill="#fff" text-anchor="middle" >13:22:24</text>
<text x="284.5" y="248.8" font-size="9.5" fill="#fff" text-anchor="middle" >13:27:24</text>
<rect x="254.2" y="79" width="45" height="22" fill="#595959"/><text x="276.5" y="95.7" font-size="17.3" fill="#fff" text-anchor="middle" >46.86</text>
<rect x="317.5" y="281" width="10.5" height="9.5" fill="#ff0000"/><rect x="317.5" y="293.5" width="10.5" height="9.5" fill="#3c6ee0"/><text x="330.5" y="290" font-size="9" fill="#fff" text-anchor="start" >(H) : 100.0</text><text x="330.5" y="301.5" font-size="9" fill="#fff" text-anchor="start" >(L ) : 20.00</text>
<rect x="564.5" y="284.5" width="45" height="22" fill="#595959"/><text x="586.8" y="301.2" font-size="17.3" fill="#fff" text-anchor="middle" >27.25</text>
<defs><linearGradient id="thg" x1="0" y1="0" x2="0" y2="1"><stop offset="0" stop-color="#f01010"/><stop offset="0.17" stop-color="#c83818"/><stop offset="0.33" stop-color="#7a7020"/><stop offset="0.34" stop-color="#689828"/><stop offset="0.50" stop-color="#40b830"/><stop offset="0.51" stop-color="#30cc40"/><stop offset="0.66" stop-color="#38c048"/><stop offset="0.67" stop-color="#3aa488"/><stop offset="0.83" stop-color="#3a8ac0"/><stop offset="1" stop-color="#3c6ee0"/></linearGradient></defs>
<rect x="449.5" y="281" width="30" height="160" fill="url(#thg)" stroke="#444" stroke-width="0.8"/>
<line x1="449.5" y1="333.8" x2="479.5" y2="333.8" stroke="#000" stroke-width="2"/>
<line x1="449.5" y1="361" x2="479.5" y2="361" stroke="#000" stroke-width="2"/>
<line x1="449.5" y1="387" x2="479.5" y2="387" stroke="#000" stroke-width="2"/>
<line x1="449.5" y1="306.7" x2="481" y2="306.7" stroke="#ff1010" stroke-width="1.6"/>
<path d="M480.5,306.8 L483.5,304 L497.2,304 L497.2,309.6 L483.5,309.6 Z" fill="#ff1010"/>
<line x1="449.5" y1="413.6" x2="481" y2="413.6" stroke="#3c6ee0" stroke-width="1.6"/>
<path d="M480.5,413.7 L483.5,411 L497.2,411 L497.2,416.5 L483.5,416.5 Z" fill="#3c6ee0"/>
<path d="M480.5,404.5 L483,402.4 L512,402.4 L512,406.7 L483,406.7 Z" fill="#33cc33"/>
<text x="343.3" y="392.5" font-size="24" fill="#fff" fill-opacity="0.54">easemind.en.alibaba.com</text>
<text x="443" y="285.3" font-size="9" fill="#f4f4f0" text-anchor="end" >120.0</text>
<text x="443" y="311.3" font-size="9" fill="#f4f4f0" text-anchor="end" >100.0</text>
<text x="443" y="338.8" font-size="9" fill="#f4f4f0" text-anchor="end" >80.00</text>
<text x="443" y="365.8" font-size="9" fill="#f4f4f0" text-anchor="end" >60.00</text>
<text x="443" y="392.3" font-size="9" fill="#f4f4f0" text-anchor="end" >40.00</text>
<text x="443" y="419.2" font-size="9" fill="#f4f4f0" text-anchor="end" >20.00</text>
<text x="443" y="442.2" font-size="9" fill="#f4f4f0" text-anchor="end" >0.000</text>
<text x="463.7" y="452.6" font-size="9.6" fill="#fff" text-anchor="middle" >24/11/2015 13:27:32</text>
<line x1="46.5" y1="502" x2="302.5" y2="502" stroke="#6a6a6a" stroke-dasharray="2.4,2" stroke-width="1"/>
<line x1="46.5" y1="518" x2="302.5" y2="518" stroke="#6a6a6a" stroke-dasharray="2.4,2" stroke-width="1"/>
<line x1="46.5" y1="534" x2="302.5" y2="534" stroke="#6a6a6a" stroke-dasharray="2.4,2" stroke-width="1"/>
<line x1="46.5" y1="550" x2="302.5" y2="550" stroke="#6a6a6a" stroke-dasharray="2.4,2" stroke-width="1"/>
<line x1="46.5" y1="566" x2="302.5" y2="566" stroke="#6a6a6a" stroke-dasharray="2.4,2" stroke-width="1"/>
<line x1="46.5" y1="582" x2="302.5" y2="582" stroke="#6a6a6a" stroke-dasharray="2.4,2" stroke-width="1"/>
<line x1="46.5" y1="598" x2="302.5" y2="598" stroke="#6a6a6a" stroke-dasharray="2.4,2" stroke-width="1"/>
<line x1="46.5" y1="614" x2="302.5" y2="614" stroke="#6a6a6a" stroke-dasharray="2.4,2" stroke-width="1"/>
<line x1="46.5" y1="630" x2="302.5" y2="630" stroke="#6a6a6a" stroke-dasharray="2.4,2" stroke-width="1"/>
<line x1="131.5" y1="486" x2="131.5" y2="646" stroke="#555" stroke-dasharray="2.4,2.1" stroke-width="1"/>
<line x1="217.5" y1="486" x2="217.5" y2="646" stroke="#555" stroke-dasharray="2.4,2.1" stroke-width="1"/>
<text x="7" y="488.7" font-size="7" fill="#eee" text-anchor="start" >33.00</text>
<text x="7" y="519.8" font-size="7" fill="#eee" text-anchor="start" >32.20</text>
<text x="7" y="552.2" font-size="7" fill="#eee" text-anchor="start" >31.40</text>
<text x="7" y="584.3" font-size="7" fill="#eee" text-anchor="start" >30.60</text>
<text x="7" y="616.6" font-size="7" fill="#eee" text-anchor="start" >29.80</text>
<text x="7" y="644" font-size="7" fill="#eee" text-anchor="start" >29.00</text>
<text x="8" y="534.4" font-size="9" fill="#e01414" text-anchor="start" >32.00</text>
<text x="7" y="594.8" font-size="9" fill="#2f5cc0" text-anchor="start" >30.50</text>
<rect x="47.00" y="547" width="3.27" height="99" fill="#fff" stroke="#33cc33" stroke-width="1.1"/>
<rect x="51.27" y="549" width="3.27" height="97" fill="#fff" stroke="#33cc33" stroke-width="1.1"/>
<rect x="55.53" y="539.7" width="3.27" height="106.29999999999995" fill="#fff" stroke="#33cc33" stroke-width="1.1"/>
<rect x="59.80" y="588" width="3.27" height="58" fill="#fff" stroke="#3c6ee0" stroke-width="1.1"/>
<rect x="64.07" y="601.2" width="3.27" height="44.799999999999955" fill="#fff" stroke="#3c6ee0" stroke-width="1.1"/>
<rect x="68.33" y="583.5" width="3.27" height="62.5" fill="#fff" stroke="#33cc33" stroke-width="1.1"/>
<rect x="72.60" y="586.2" width="3.27" height="59.799999999999955" fill="#fff" stroke="#33cc33" stroke-width="1.1"/>
<rect x="76.87" y="595.7" width="3.27" height="50.299999999999955" fill="#fff" stroke="#3c6ee0" stroke-width="1.1"/>
<rect x="81.13" y="594.6" width="3.27" height="51.39999999999998" fill="#fff" stroke="#3c6ee0" stroke-width="1.1"/>
<rect x="85.40" y="594" width="3.27" height="52" fill="#fff" stroke="#3c6ee0" stroke-width="1.1"/>
<rect x="89.67" y="642" width="3.27" height="4" fill="#fff" stroke="#3c6ee0" stroke-width="1.1"/>
<rect x="93.93" y="610.5" width="3.27" height="35.5" fill="#fff" stroke="#3c6ee0" stroke-width="1.1"/>
<rect x="98.20" y="614.5" width="3.27" height="31.5" fill="#fff" stroke="#3c6ee0" stroke-width="1.1"/>
<rect x="102.47" y="607.7" width="3.27" height="38.299999999999955" fill="#fff" stroke="#3c6ee0" stroke-width="1.1"/>
<rect x="106.73" y="606.8" width="3.27" height="39.200000000000045" fill="#fff" stroke="#3c6ee0" stroke-width="1.1"/>
<rect x="111.00" y="607.7" width="3.27" height="38.299999999999955" fill="#fff" stroke="#3c6ee0" stroke-width="1.1"/>
<rect x="115.27" y="608.3" width="3.27" height="37.700000000000045" fill="#fff" stroke="#3c6ee0" stroke-width="1.1"/>
<rect x="119.53" y="607.7" width="3.27" height="38.299999999999955" fill="#fff" stroke="#3c6ee0" stroke-width="1.1"/>
<rect x="123.80" y="611.2" width="3.27" height="34.799999999999955" fill="#fff" stroke="#3c6ee0" stroke-width="1.1"/>
<rect x="128.07" y="611.2" width="3.27" height="34.799999999999955" fill="#fff" stroke="#3c6ee0" stroke-width="1.1"/>
<rect x="132.33" y="612.3" width="3.27" height="33.700000000000045" fill="#fff" stroke="#3c6ee0" stroke-width="1.1"/>
<rect x="136.60" y="613.2" width="3.27" height="32.799999999999955" fill="#fff" stroke="#3c6ee0" stroke-width="1.1"/>
<rect x="140.87" y="617.2" width="3.27" height="28.799999999999955" fill="#fff" stroke="#3c6ee0" stroke-width="1.1"/>
<rect x="145.13" y="623.8" width="3.27" height="22.200000000000045" fill="#fff" stroke="#3c6ee0" stroke-width="1.1"/>
<rect x="149.40" y="627.6" width="3.27" height="18.399999999999977" fill="#fff" stroke="#3c6ee0" stroke-width="1.1"/>
<rect x="153.67" y="612.3" width="3.27" height="33.700000000000045" fill="#fff" stroke="#3c6ee0" stroke-width="1.1"/>
<rect x="157.93" y="611.2" width="3.27" height="34.799999999999955" fill="#fff" stroke="#3c6ee0" stroke-width="1.1"/>
<rect x="162.20" y="611.2" width="3.27" height="34.799999999999955" fill="#fff" stroke="#3c6ee0" stroke-width="1.1"/>
<rect x="166.47" y="611.2" width="3.27" height="34.799999999999955" fill="#fff" stroke="#3c6ee0" stroke-width="1.1"/>
<rect x="170.73" y="626.7" width="3.27" height="19.299999999999955" fill="#fff" stroke="#3c6ee0" stroke-width="1.1"/>
<rect x="175.00" y="600.6" width="3.27" height="45.39999999999998" fill="#fff" stroke="#3c6ee0" stroke-width="1.1"/>
<rect x="179.27" y="596.8" width="3.27" height="49.200000000000045" fill="#fff" stroke="#3c6ee0" stroke-width="1.1"/>
<rect x="183.53" y="589.5" width="3.27" height="56.5" fill="#fff" stroke="#3c6ee0" stroke-width="1.1"/>
<rect x="187.80" y="592.8" width="3.27" height="53.200000000000045" fill="#fff" stroke="#3c6ee0" stroke-width="1.1"/>
<rect x="192.07" y="591" width="3.27" height="55" fill="#fff" stroke="#3c6ee0" stroke-width="1.1"/>
<rect x="196.33" y="591.7" width="3.27" height="54.299999999999955" fill="#fff" stroke="#3c6ee0" stroke-width="1.1"/>
<rect x="200.60" y="588" width="3.27" height="58" fill="#fff" stroke="#3c6ee0" stroke-width="1.1"/>
<rect x="204.87" y="588" width="3.27" height="58" fill="#fff" stroke="#3c6ee0" stroke-width="1.1"/>
<rect x="209.13" y="586.2" width="3.27" height="59.799999999999955" fill="#fff" stroke="#3c6ee0" stroke-width="1.1"/>
<rect x="213.40" y="587.3" width="3.27" height="58.700000000000045" fill="#fff" stroke="#3c6ee0" stroke-width="1.1"/>
<rect x="217.67" y="589" width="3.27" height="57" fill="#fff" stroke="#3c6ee0" stroke-width="1.1"/>
<rect x="221.93" y="555.9" width="3.27" height="90.10000000000002" fill="#fff" stroke="#33cc33" stroke-width="1.1"/>
<rect x="226.20" y="560.8" width="3.27" height="85.20000000000005" fill="#fff" stroke="#33cc33" stroke-width="1.1"/>
<rect x="230.47" y="559.6" width="3.27" height="86.39999999999998" fill="#fff" stroke="#33cc33" stroke-width="1.1"/>
<rect x="234.73" y="558.5" width="3.27" height="87.5" fill="#fff" stroke="#33cc33" stroke-width="1.1"/>
<rect x="239.00" y="556.8" width="3.27" height="89.20000000000005" fill="#fff" stroke="#33cc33" stroke-width="1.1"/>
<rect x="243.27" y="555.9" width="3.27" height="90.10000000000002" fill="#fff" stroke="#33cc33" stroke-width="1.1"/>
<rect x="247.53" y="555.2" width="3.27" height="90.79999999999995" fill="#fff" stroke="#33cc33" stroke-width="1.1"/>
<rect x="251.80" y="559.6" width="3.27" height="86.39999999999998" fill="#fff" stroke="#33cc33" stroke-width="1.1"/>
<rect x="256.07" y="547" width="3.27" height="99" fill="#fff" stroke="#33cc33" stroke-width="1.1"/>
<rect x="260.33" y="546.4" width="3.27" height="99.60000000000002" fill="#fff" stroke="#33cc33" stroke-width="1.1"/>
<rect x="264.60" y="547.5" width="3.27" height="98.5" fill="#fff" stroke="#33cc33" stroke-width="1.1"/>
<rect x="268.87" y="545.3" width="3.27" height="100.70000000000005" fill="#fff" stroke="#33cc33" stroke-width="1.1"/>
<rect x="273.13" y="539.3" width="3.27" height="106.70000000000005" fill="#fff" stroke="#33cc33" stroke-width="1.1"/>
<rect x="277.40" y="539.7" width="3.27" height="106.29999999999995" fill="#fff" stroke="#33cc33" stroke-width="1.1"/>
<rect x="281.67" y="538.6" width="3.27" height="107.39999999999998" fill="#fff" stroke="#33cc33" stroke-width="1.1"/>
<rect x="285.93" y="538" width="3.27" height="108" fill="#fff" stroke="#33cc33" stroke-width="1.1"/>
<rect x="290.20" y="539.7" width="3.27" height="106.29999999999995" fill="#fff" stroke="#33cc33" stroke-width="1.1"/>
<rect x="294.47" y="538.6" width="3.27" height="107.39999999999998" fill="#fff" stroke="#33cc33" stroke-width="1.1"/>
<rect x="298.73" y="535.8" width="3.27" height="110.20000000000005" fill="#fff" stroke="#33cc33" stroke-width="1.1"/>
<rect x="46.5" y="486" width="256.0" height="160" fill="none" stroke="#8c8c8c" stroke-width="1"/>
<line x1="46.5" y1="525.7" x2="302.5" y2="525.7" stroke="#e21010" stroke-width="2"/>
<line x1="46.5" y1="585.7" x2="302.5" y2="585.7" stroke="#3a6ae0" stroke-width="2"/>
<text x="113.5" y="660" font-size="9.5" fill="#fff" text-anchor="middle" >13:17:24</text>
<text x="199.5" y="660" font-size="9.5" fill="#fff" text-anchor="middle" >13:22:24</text>
<text x="284.5" y="660" font-size="9.5" fill="#fff" text-anchor="middle" >13:27:24</text>
<rect x="254.5" y="490" width="45" height="22" fill="#595959"/><text x="276.8" y="506.7" font-size="17.3" fill="#fff" text-anchor="middle" >31.75</text>
<rect x="317.5" y="486" width="10.5" height="9.5" fill="#ff0000"/><rect x="317.5" y="498.5" width="10.5" height="9.5" fill="#3c6ee0"/><text x="330.5" y="495" font-size="9" fill="#fff" text-anchor="start" >(H) : 100.0</text><text x="330.5" y="506.5" font-size="9" fill="#fff" text-anchor="start" >(L ) : 20.00</text>
<rect x="564.5" y="490" width="45" height="22" fill="#595959"/><text x="586.8" y="506.7" font-size="17.3" fill="#fff" text-anchor="middle" >28.43</text>
<defs><radialGradient id="ring" cx="0.5" cy="0.5" r="0.5"><stop offset="0.86" stop-color="#303030"/><stop offset="0.905" stop-color="#b8b8b8"/><stop offset="0.95" stop-color="#dcdcdc"/><stop offset="1" stop-color="#3a3a3a"/></radialGradient><clipPath id="p8c"><rect x="380" y="480" width="180" height="142"/></clipPath></defs>
<path d="M413.73,626.07 A71.8,71.8 0 1 1 515.27,626.07" fill="none" stroke="#4a4a4a" stroke-width="9.5" stroke-linecap="round"/>
<path d="M413.73,626.07 A71.8,71.8 0 1 1 515.27,626.07" fill="none" stroke="#8a8a8a" stroke-width="7" stroke-linecap="round"/>
<path d="M413.73,626.07 A71.8,71.8 0 1 1 515.27,626.07" fill="none" stroke="#c4c4c4" stroke-width="4.5" stroke-linecap="round"/>
<path d="M413.73,626.07 A71.8,71.8 0 1 1 515.27,626.07" fill="none" stroke="#e4e4e4" stroke-width="2"/>
<circle cx="464.5" cy="575.3" r="68" fill="#fff" clip-path="url(#p8c)"/>
<path d="M418.11,621.69 A65.6,65.6 0 0 1 398.90,575.30" fill="none" stroke="#3c6ee0" stroke-width="3.6"/>
<path d="M398.90,575.30 A65.6,65.6 0 0 1 530.10,575.30" fill="none" stroke="#33cc33" stroke-width="3.6"/>
<path d="M530.10,575.30 A65.6,65.6 0 0 1 510.89,621.69" fill="none" stroke="#ff1010" stroke-width="3.6"/>
<line x1="419.95" y1="619.85" x2="424.19" y2="615.61" stroke="#555" stroke-width="0.9"/>
<line x1="413.53" y1="612.33" x2="415.96" y2="610.57" stroke="#555" stroke-width="0.9"/>
<line x1="408.37" y1="603.90" x2="411.04" y2="602.54" stroke="#555" stroke-width="0.9"/>
<line x1="404.58" y1="594.77" x2="407.44" y2="593.84" stroke="#555" stroke-width="0.9"/>
<line x1="402.28" y1="585.16" x2="405.24" y2="584.69" stroke="#555" stroke-width="0.9"/>
<line x1="401.50" y1="575.30" x2="407.50" y2="575.30" stroke="#555" stroke-width="0.9"/>
<line x1="402.28" y1="565.44" x2="405.24" y2="565.91" stroke="#555" stroke-width="0.9"/>
<line x1="404.58" y1="555.83" x2="407.44" y2="556.76" stroke="#555" stroke-width="0.9"/>
<line x1="408.37" y1="546.70" x2="411.04" y2="548.06" stroke="#555" stroke-width="0.9"/>
<line x1="413.53" y1="538.27" x2="415.96" y2="540.03" stroke="#555" stroke-width="0.9"/>
<line x1="419.95" y1="530.75" x2="424.19" y2="534.99" stroke="#555" stroke-width="0.9"/>
<line x1="427.47" y1="524.33" x2="429.23" y2="526.76" stroke="#555" stroke-width="0.9"/>
<line x1="435.90" y1="519.17" x2="437.26" y2="521.84" stroke="#555" stroke-width="0.9"/>
<line x1="445.03" y1="515.38" x2="445.96" y2="518.24" stroke="#555" stroke-width="0.9"/>
<line x1="454.64" y1="513.08" x2="455.11" y2="516.04" stroke="#555" stroke-width="0.9"/>
<line x1="464.50" y1="512.30" x2="464.50" y2="518.30" stroke="#555" stroke-width="0.9"/>
<line x1="474.36" y1="513.08" x2="473.89" y2="516.04" stroke="#555" stroke-width="0.9"/>
<line x1="483.97" y1="515.38" x2="483.04" y2="518.24" stroke="#555" stroke-width="0.9"/>
<line x1="493.10" y1="519.17" x2="491.74" y2="521.84" stroke="#555" stroke-width="0.9"/>
<line x1="501.53" y1="524.33" x2="499.77" y2="526.76" stroke="#555" stroke-width="0.9"/>
<line x1="509.05" y1="530.75" x2="504.81" y2="534.99" stroke="#555" stroke-width="0.9"/>
<line x1="515.47" y1="538.27" x2="513.04" y2="540.03" stroke="#555" stroke-width="0.9"/>
<line x1="520.63" y1="546.70" x2="517.96" y2="548.06" stroke="#555" stroke-width="0.9"/>
<line x1="524.42" y1="555.83" x2="521.56" y2="556.76" stroke="#555" stroke-width="0.9"/>
<line x1="526.72" y1="565.44" x2="523.76" y2="565.91" stroke="#555" stroke-width="0.9"/>
<line x1="527.50" y1="575.30" x2="521.50" y2="575.30" stroke="#555" stroke-width="0.9"/>
<line x1="526.72" y1="585.16" x2="523.76" y2="584.69" stroke="#555" stroke-width="0.9"/>
<line x1="524.42" y1="594.77" x2="521.56" y2="593.84" stroke="#555" stroke-width="0.9"/>
<line x1="520.63" y1="603.90" x2="517.96" y2="602.54" stroke="#555" stroke-width="0.9"/>
<line x1="515.47" y1="612.33" x2="513.04" y2="610.57" stroke="#555" stroke-width="0.9"/>
<line x1="509.05" y1="619.85" x2="504.81" y2="615.61" stroke="#555" stroke-width="0.9"/>
<text x="464" y="524" font-size="7" fill="#505050" text-anchor="middle" >60.00</text>
<text x="429.2" y="540" font-size="7" fill="#505050" text-anchor="middle" >40.00</text>
<text x="496.3" y="540.5" font-size="7" fill="#505050" text-anchor="middle" >80.00</text>
<text x="416.6" y="578.6" font-size="7" fill="#505050" text-anchor="middle" >20.00</text>
<text x="512.5" y="578.6" font-size="7" fill="#505050" text-anchor="middle" >100.0</text>
<text x="432.4" y="619.2" font-size="7" fill="#505050" text-anchor="middle" >0.000</text>
<text x="496.3" y="619.2" font-size="7" fill="#505050" text-anchor="middle" >120.0</text>
<rect x="416" y="622" width="97" height="6" fill="#474747"/>
<path d="M401.15,553.49 L455.51,574.89 L475.84,577.22 L457.27,569.93 L401.62,552.17 Z" fill="#333"/>
<circle cx="464.0" cy="574.3" r="1.8" fill="none" stroke="#888" stroke-width="0.7"/>
<text x="463.7" y="658.3" font-size="9.6" fill="#fff" text-anchor="middle" >24/11/2015 13:27:32</text>
<line x1="666.5" y1="502" x2="923" y2="502" stroke="#6a6a6a" stroke-dasharray="2.4,2" stroke-width="1"/>
<line x1="666.5" y1="518" x2="923" y2="518" stroke="#6a6a6a" stroke-dasharray="2.4,2" stroke-width="1"/>
<line x1="666.5" y1="534" x2="923" y2="534" stroke="#6a6a6a" stroke-dasharray="2.4,2" stroke-width="1"/>
<line x1="666.5" y1="550" x2="923" y2="550" stroke="#6a6a6a" stroke-dasharray="2.4,2" stroke-width="1"/>
<line x1="666.5" y1="566" x2="923" y2="566" stroke="#6a6a6a" stroke-dasharray="2.4,2" stroke-width="1"/>
<line x1="666.5" y1="582" x2="923" y2="582" stroke="#6a6a6a" stroke-dasharray="2.4,2" stroke-width="1"/>
<line x1="666.5" y1="598" x2="923" y2="598" stroke="#6a6a6a" stroke-dasharray="2.4,2" stroke-width="1"/>
<line x1="666.5" y1="614" x2="923" y2="614" stroke="#6a6a6a" stroke-dasharray="2.4,2" stroke-width="1"/>
<line x1="666.5" y1="630" x2="923" y2="630" stroke="#6a6a6a" stroke-dasharray="2.4,2" stroke-width="1"/>
<line x1="752" y1="486" x2="752" y2="646.5" stroke="#555" stroke-dasharray="2.4,2.1" stroke-width="1"/>
<line x1="838.5" y1="486" x2="838.5" y2="646.5" stroke="#555" stroke-dasharray="2.4,2.1" stroke-width="1"/>
<rect x="666.5" y="486" width="256.5" height="160.5" fill="none" stroke="#8c8c8c" stroke-width="1"/>
<defs><clipPath id="c9b"><rect x="833.3" y="480" width="29.7" height="170"/><rect x="884.5" y="480" width="21.2" height="170"/></clipPath></defs>
<path d="M670.2,646.5 L670.2,544.2 L674.8,535.9 L678.8,527.0 L682.8,527.0 L687.2,534.5 L692.1,533.7 L695.8,526.4 L700.0,514.2 L704.9,526.4 L708.2,545.6 L713.1,544.1 L717.5,575.7 L721.3,578.3 L725.7,574.4 L730.4,583.9 L734.1,577.2 L738.5,580.6 L743.0,571.3 L746.9,574.4 L751.4,580.6 L755.8,571.3 L760.2,575.0 L764.0,559.1 L768.4,552.9 L772.8,551.4 L776.8,553.3 L781.2,556.7 L785.7,551.4 L790.1,545.2 L794.0,542.9 L798.4,577.2 L802.2,571.3 L806.6,567.9 L811.0,588.7 L815.0,579.9 L819.4,568.8 L823.8,588.3 L828.1,576.8 L832.0,602.0 L836.5,601.1 L840.9,604.2 L844.9,593.4 L849.3,613.7 L853.7,607.1 L857.5,593.8 L861.9,579.9 L866.3,580.6 L870.3,571.3 L874.7,575.0 L879.2,588.7 L882.9,607.5 L887.3,606.4 L892.2,596.7 L896.2,598.3 L900.2,606.7 L904.6,580.6 L908.8,571.3 L913.2,588.7 L917.7,571.3 L922.1,568.8 L922.1,646.5 Z" fill="#33cc33"/>
<path d="M670.2,646.5 L670.2,544.2 L674.8,535.9 L678.8,527.0 L682.8,527.0 L687.2,534.5 L692.1,533.7 L695.8,526.4 L700.0,514.2 L704.9,526.4 L708.2,545.6 L713.1,544.1 L717.5,575.7 L721.3,578.3 L725.7,574.4 L730.4,583.9 L734.1,577.2 L738.5,580.6 L743.0,571.3 L746.9,574.4 L751.4,580.6 L755.8,571.3 L760.2,575.0 L764.0,559.1 L768.4,552.9 L772.8,551.4 L776.8,553.3 L781.2,556.7 L785.7,551.4 L790.1,545.2 L794.0,542.9 L798.4,577.2 L802.2,571.3 L806.6,567.9 L811.0,588.7 L815.0,579.9 L819.4,568.8 L823.8,588.3 L828.1,576.8 L832.0,602.0 L836.5,601.1 L840.9,604.2 L844.9,593.4 L849.3,613.7 L853.7,607.1 L857.5,593.8 L861.9,579.9 L866.3,580.6 L870.3,571.3 L874.7,575.0 L879.2,588.7 L882.9,607.5 L887.3,606.4 L892.2,596.7 L896.2,598.3 L900.2,606.7 L904.6,580.6 L908.8,571.3 L913.2,588.7 L917.7,571.3 L922.1,568.8 L922.1,646.5 Z" fill="#0a7cc8" clip-path="url(#c9b)"/>
<rect x="700.4" y="515.5" width="5" height="131.0" fill="#ff0000"/>
<line x1="666.5" y1="525.6" x2="923" y2="525.6" stroke="#e21010" stroke-width="2"/>
<line x1="666.5" y1="592.4" x2="923" y2="592.4" stroke="#1a88c8" stroke-width="1.7"/>
<text x="627" y="489.3" font-size="7" fill="#eee" text-anchor="start" >50.00</text>
<text x="627" y="520.7" font-size="7" fill="#eee" text-anchor="start" >48.80</text>
<text x="627" y="552.8" font-size="7" fill="#eee" text-anchor="start" >47.60</text>
<text x="627" y="585" font-size="7" fill="#eee" text-anchor="start" >46.40</text>
<text x="627" y="617.1" font-size="7" fill="#eee" text-anchor="start" >45.20</text>
<text x="627" y="644.3" font-size="7" fill="#eee" text-anchor="start" >44.00</text>
<text x="627.5" y="534.8" font-size="9" fill="#e01414" text-anchor="start" >48.50</text>
<text x="627" y="601" font-size="9" fill="#1a88d0" text-anchor="start" >46.00</text>
<text x="733.5" y="660" font-size="9.5" fill="#fff" text-anchor="middle" >13:17:24</text>
<text x="819.5" y="660" font-size="9.5" fill="#fff" text-anchor="middle" >13:22:24</text>
<text x="905.0" y="660" font-size="9.5" fill="#fff" text-anchor="middle" >13:27:24</text>
<rect x="874.5" y="490" width="45" height="22" fill="#595959"/><text x="896.8" y="506.7" font-size="17.3" fill="#fff" text-anchor="middle" >46.86</text>
<path d="M22.2,6.8 V4 Q22.2,3.2 23,3.2 H30.9 Q31.7,3.2 31.7,4 V17.6 Q31.7,18.4 30.9,18.4 H23 Q22.2,18.4 22.2,17.6 V14.8" fill="none" stroke="#7a7a7a" stroke-width="1.8"/>
<path d="M18.2,8.9 H23.2 V6.6 L28.4,10.8 L23.2,15 V12.7 H18.2 Z" fill="#8c8c8c"/>
<rect x="79.3" y="2.8999999999999986" width="3" height="4" fill="#8a8a8a" transform="rotate(22.5 80.8 11.2)"/><rect x="79.3" y="2.8999999999999986" width="3" height="4" fill="#8a8a8a" transform="rotate(67.5 80.8 11.2)"/><rect x="79.3" y="2.8999999999999986" width="3" height="4" fill="#8a8a8a" transform="rotate(112.5 80.8 11.2)"/><rect x="79.3" y="2.8999999999999986" width="3" height="4" fill="#8a8a8a" transform="rotate(157.5 80.8 11.2)"/><rect x="79.3" y="2.8999999999999986" width="3" height="4" fill="#8a8a8a" transform="rotate(202.5 80.8 11.2)"/><rect x="79.3" y="2.8999999999999986" width="3" height="4" fill="#8a8a8a" transform="rotate(247.5 80.8 11.2)"/><rect x="79.3" y="2.8999999999999986" width="3" height="4" fill="#8a8a8a" transform="rotate(292.5 80.8 11.2)"/><rect x="79.3" y="2.8999999999999986" width="3" height="4" fill="#8a8a8a" transform="rotate(337.5 80.8 11.2)"/>
<circle cx="80.8" cy="11.2" r="4.7" fill="none" stroke="#8a8a8a" stroke-width="4.4"/>
<defs><linearGradient id="lvb" x1="0" y1="0" x2="0" y2="1"><stop offset="0" stop-color="#6aa8f8"/><stop offset="1" stop-color="#1f66f0"/></linearGradient></defs>
<rect x="128" y="14.3" width="2.8000000000000114" height="5.699999999999999" rx="0.8" fill="url(#lvb)"/>
<rect x="131.9" y="11.8" width="2.5" height="8.2" rx="0.8" fill="url(#lvb)"/>
<rect x="136.1" y="11" width="2.5999999999999943" height="9" rx="0.8" fill="url(#lvb)"/>
<rect x="140" y="7.9" width="2.9000000000000057" height="12.1" rx="0.8" fill="url(#lvb)"/>
<polyline points="128.6,12.6 134.2,7.4 136.7,9.3 140.8,5" fill="none" stroke="#5a9cf0" stroke-width="1.5" stroke-linecap="round"/>
<path d="M138.8,3.2 L143.3,2.3 L142.4,6.8 Z" fill="#5a9cf0"/>
<circle cx="186.4" cy="9.4" r="5" fill="none" stroke="#8c8c8c" stroke-width="1.8"/>
<line x1="190" y1="13" x2="195.5" y2="18.5" stroke="#6a6a6a" stroke-width="2.4" stroke-linecap="round"/>
<path d="M767,37.5 H761 V47.2 H770.3 V42" fill="none" stroke="#f0f0f0" stroke-width="1.7"/>
<path d="M771.2,41.6 L773.8,44.2 L767.6,50.4 L765,51 L765.6,48.4 Z" fill="#e0e0e0"/>
<rect x="790.5" y="36" width="9.7" height="13.2" rx="0.8" fill="none" stroke="#d8d8d8" stroke-width="1.1"/>
<line x1="791.5" y1="39.3" x2="799.2" y2="39.3" stroke="#fff" stroke-width="1.6" stroke-dasharray="2,0.6"/>
<line x1="791.5" y1="42.6" x2="799.2" y2="42.6" stroke="#fff" stroke-width="1.6" stroke-dasharray="2,0.6"/>
<line x1="791.5" y1="46" x2="799.2" y2="46" stroke="#fff" stroke-width="1.6" stroke-dasharray="2,0.6"/>
<path d="M822.6,37.6 H818.8 V47.2 H822.6" fill="none" stroke="#f0f0f0" stroke-width="1.7"/>
<path d="M824.6,37 L832.8,42.4 L824.6,47.8 Z" fill="#f0f0f0"/>
<path d="M849.5,38.5 Q853,36 856,38.5 Q859,36 862.5,38.5 V47.5 Q859,45.5 856,47.5 Q853,45.5 849.5,47.5 Z M856,38.5 V47.5" fill="none" stroke="#e8e8e8" stroke-width="1.4"/>
<path d="M880,36 H888.5 L890.3,37.8 V48 H880 Z" fill="#f4f4f4"/>
<rect x="882" y="36" width="5.5" height="3.2" fill="#bbb"/>
<path d="M910.8,39.5 H921 L920,48.5 Q920,49.2 919.3,49.2 H912.5 Q911.8,49.2 911.8,48.5 Z" fill="none" stroke="#f0f0f0" stroke-width="1.4"/>
<path d="M910,38.3 H921.8 M913.5,38 Q913.5,35.2 915.9,35.2 Q918.3,35.2 918.3,38" fill="none" stroke="#f0f0f0" stroke-width="1.3"/>
<path d="M913.9,41.3 V47.3 M916,41.3 V47.3 M918.1,41.3 V47.3" stroke="#f0f0f0" stroke-width="1.1" fill="none"/>
<path d="M938,40.3 H941 L945.5,36.5 V49.5 L941,45.7 H938 Z" fill="#ff1010"/>
<path d="M947.5,39.5 Q949.5,43 947.5,46.5 M949.8,37.2 Q953.2,43 949.8,48.8" fill="none" stroke="#ff1010" stroke-width="1.5" stroke-linecap="round"/>
<path d="M894.2,3.2 V10.2 H898.6 M892.6,5 L894.2,3 L895.8,5 M892.6,6.2 H896" fill="none" stroke="#fff" stroke-width="1.5"/>
<path d="M897.4,4.6 H900.6 V11 M898.9,9.2 L900.6,11.4 L902.3,9.2" fill="none" stroke="#fff" stroke-width="1.5"/>
<rect x="916" y="6.3" width="8" height="2.6" fill="#fff"/>
<defs><radialGradient id="ballR" cx="0.45" cy="0.35" r="0.7"><stop offset="0" stop-color="#ff9aa8"/><stop offset="0.45" stop-color="#e82a40"/><stop offset="1" stop-color="#a01020"/></radialGradient><radialGradient id="ballG" cx="0.45" cy="0.4" r="0.7"><stop offset="0" stop-color="#b8ffa0"/><stop offset="0.5" stop-color="#4cd030"/><stop offset="1" stop-color="#2a9a18"/></radialGradient><radialGradient id="ballG2" cx="0.5" cy="0.45" r="0.6"><stop offset="0" stop-color="#9af070"/><stop offset="0.6" stop-color="#5ad83a"/><stop offset="1" stop-color="#3aaa28"/></radialGradient><linearGradient id="silv" x1="0" y1="0" x2="0" y2="1"><stop offset="0" stop-color="#f4f4f4"/><stop offset="0.5" stop-color="#9a9a9a"/><stop offset="1" stop-color="#e8e8e8"/></linearGradient><radialGradient id="btnS" cx="0.5" cy="0.4" r="0.6"><stop offset="0" stop-color="#ffffff"/><stop offset="0.7" stop-color="#d8d8d8"/><stop offset="1" stop-color="#a8a8a8"/></radialGradient></defs>
<circle cx="945.5" cy="86" r="11.3" fill="url(#silv)"/><circle cx="945.5" cy="86" r="8.8" fill="url(#ballR)"/><ellipse cx="945.5" cy="82" rx="5" ry="2.8" fill="#fff" fill-opacity="0.45"/>
<circle cx="945.5" cy="154" r="11.5" fill="#22b022"/><circle cx="945.5" cy="154" r="10.3" fill="url(#btnS)"/><path d="M942.6,150.8 A4.6,4.6 0 1 0 948.4,150.8" fill="none" stroke="#22b022" stroke-width="1.6"/><line x1="945.5" y1="148" x2="945.5" y2="153.2" stroke="#22b022" stroke-width="1.6"/>
<circle cx="945.5" cy="223" r="11.3" fill="url(#silv)"/><circle cx="945.5" cy="223" r="8.8" fill="url(#ballG)"/><ellipse cx="945.5" cy="219" rx="5" ry="2.8" fill="#fff" fill-opacity="0.45"/>
<circle cx="945.5" cy="291" r="11.3" fill="url(#silv)"/><circle cx="945.5" cy="291" r="8.8" fill="url(#ballG)"/><ellipse cx="945.5" cy="287" rx="5" ry="2.8" fill="#fff" fill-opacity="0.45"/>
<circle cx="945.5" cy="359" r="12.8" fill="url(#ballG2)"/>
<circle cx="945.5" cy="428.5" r="11.5" fill="#dd1a1a"/><circle cx="945.5" cy="428.5" r="10.3" fill="url(#btnS)"/><path d="M942.6,425.3 A4.6,4.6 0 1 0 948.4,425.3" fill="none" stroke="#dd1a1a" stroke-width="1.6"/><line x1="945.5" y1="422.5" x2="945.5" y2="427.7" stroke="#dd1a1a" stroke-width="1.6"/>
<circle cx="945.5" cy="495.5" r="11.5" fill="#22b022"/><circle cx="945.5" cy="495.5" r="10.3" fill="url(#btnS)"/><path d="M942.6,492.3 A4.6,4.6 0 1 0 948.4,492.3" fill="none" stroke="#22b022" stroke-width="1.6"/><line x1="945.5" y1="489.5" x2="945.5" y2="494.7" stroke="#22b022" stroke-width="1.6"/>
<defs><linearGradient id="swR" x1="0" y1="0" x2="0" y2="1"><stop offset="0" stop-color="#e83030"/><stop offset="1" stop-color="#b01212"/></linearGradient><linearGradient id="swGr" x1="0" y1="0" x2="0" y2="1"><stop offset="0" stop-color="#f4f4f4"/><stop offset="1" stop-color="#c4c4c4"/></linearGradient><linearGradient id="swG" x1="0" y1="0" x2="0" y2="1"><stop offset="0" stop-color="#2aa02a"/><stop offset="1" stop-color="#137a13"/></linearGradient></defs>
<rect x="933.8" y="553" width="22.6" height="22.4" rx="2" fill="url(#swGr)" stroke="#9a9a9a" stroke-width="0.7"/>
<path d="M934.2,564.8 V555 Q934.2,553.4 936,553.4 H954.2 Q956,553.4 956,555 V564.8 Z" fill="url(#swR)"/>
<text x="945.1" y="562.4" font-size="8.5" font-weight="bold" fill="#fff" text-anchor="middle" transform="translate(945.1 0) scale(0.9 1) translate(-945.1 0)">ON</text>
<rect x="933.8" y="622" width="22.6" height="22.6" rx="2" fill="url(#swGr)" stroke="#9a9a9a" stroke-width="0.7"/>
<path d="M934.2,633 H956 V642.6 Q956,644.2 954.2,644.2 H936 Q934.2,644.2 934.2,642.6 Z" fill="url(#swG)"/>
<text x="945.1" y="642" font-size="8.5" font-weight="bold" fill="#fff" text-anchor="middle" transform="translate(945.1 0) scale(0.9 1) translate(-945.1 0)">OFF</text>
<circle cx="16.5" cy="758.3" r="6.6" fill="none" stroke="#3a7ae8" stroke-width="1.7"/>
<path d="M16.7,754.3 V758.6 H19.6" fill="none" stroke="#3a7ae8" stroke-width="1.3"/>
<defs><radialGradient id="glob" cx="0.5" cy="0.3" r="0.7"><stop offset="0" stop-color="#e8f4ff"/><stop offset="0.35" stop-color="#8ac4ff"/><stop offset="0.8" stop-color="#2a7ae8"/><stop offset="1" stop-color="#1a4ab0"/></radialGradient></defs>
<circle cx="174" cy="757.8" r="7.5" fill="url(#glob)"/>
<ellipse cx="174" cy="753.6" rx="4.6" ry="2.4" fill="#fff" fill-opacity="0.7"/>
<path d="M816,748.4 C826,745.8 837,749.5 844,756.8" stroke="#e0e0e0" stroke-width="1.4" fill="none"/>
<path d="M816.5,748.8 C819,752 823,753.4 829,753.2 C835,753.2 839,754.6 843,756.4" stroke="#bdbdbd" stroke-width="0.9" fill="none"/>
<path d="M820,754.6 C824,753.4 829,753.8 832.5,756.2" stroke="#c8c8c8" stroke-width="1" fill="none"/>
<text x="825" y="762.4" font-size="9.6" font-weight="bold" font-style="italic" fill="#f0f0f0" font-family="Liberation Serif" transform="translate(825 0) scale(1.33 1) translate(-825 0)">EaseMind</text></svg>
</body></html>
